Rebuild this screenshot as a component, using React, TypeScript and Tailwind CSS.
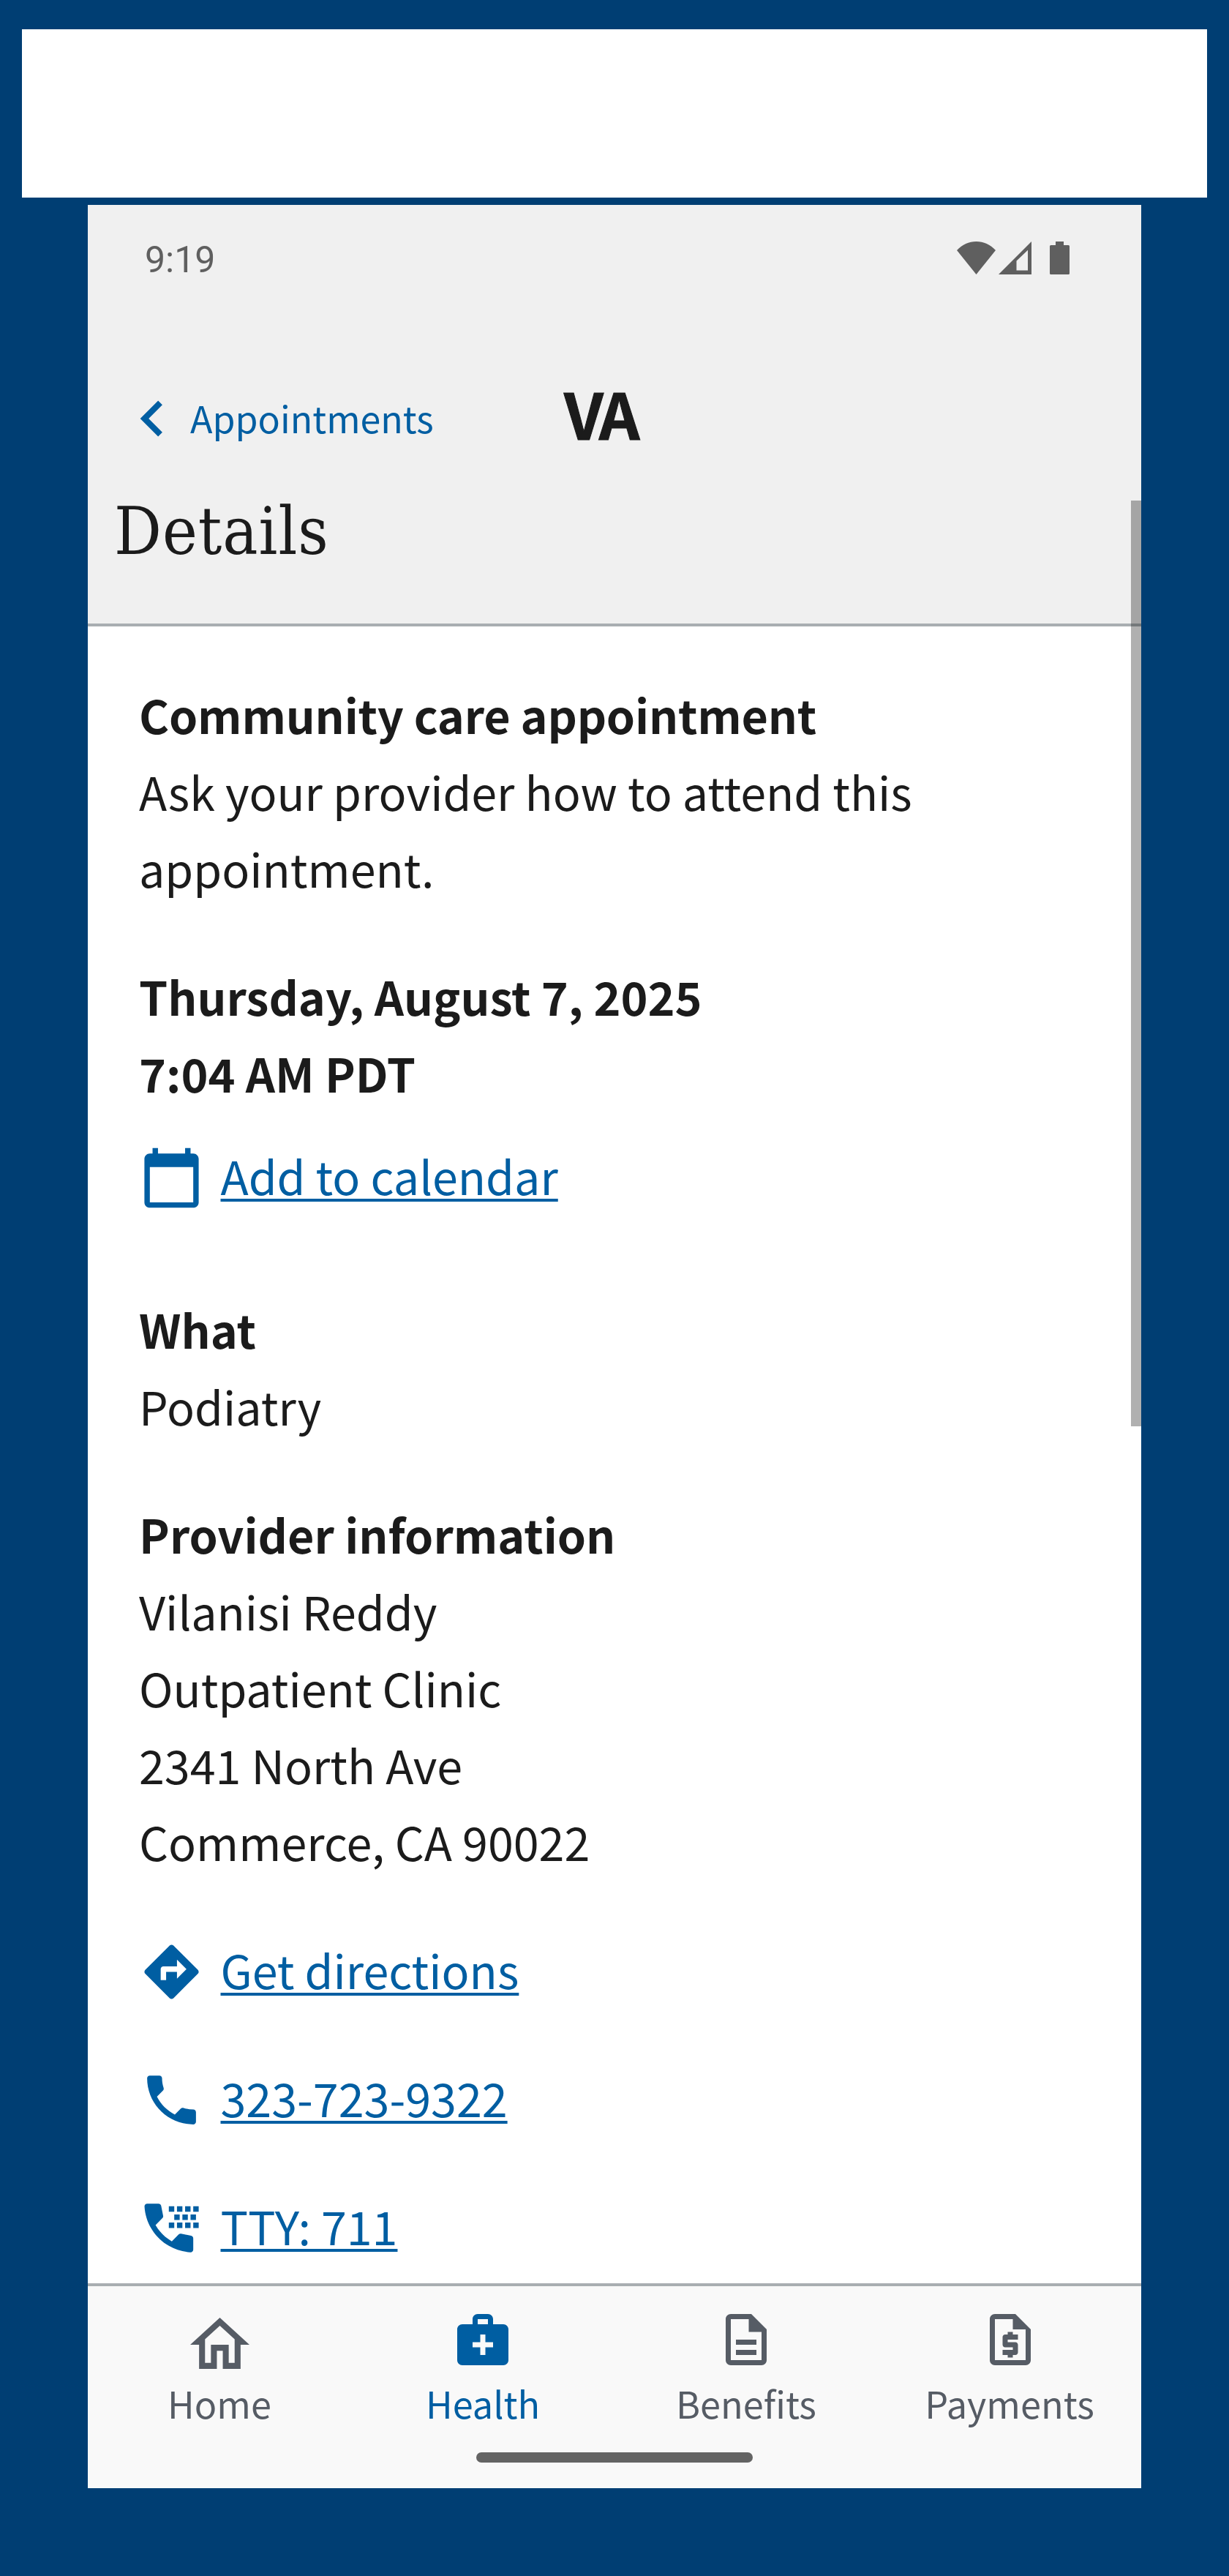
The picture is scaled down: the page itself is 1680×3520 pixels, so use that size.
import type { ReactNode } from "react";
import { MdTty } from "react-icons/md";

const SANS = "font-['Noto_Sans_CJK_SC',sans-serif]";

type IconProps = { d: string; viewBox?: string; className?: string };

function Icon({ d, viewBox = "0 0 24 24", className = "" }: IconProps) {
  return (
    <svg viewBox={viewBox} preserveAspectRatio="none" fill="currentColor" className={`block shrink-0 ${className}`}>
      <path d={d} />
    </svg>
  );
}

const CHEVRON = "M15.41 7.41L14 6l-6 6 6 6 1.41-1.41L10.83 12z";
const CALENDAR =
  "M20 3h-1V1h-2v2H7V1H5v2H4c-1.1 0-2 .9-2 2v16c0 1.1.9 2 2 2h16c1.1 0 2-.9 2-2V5c0-1.1-.9-2-2-2zm0 18H4V8h16v13z";
const DIRECTIONS =
  "M21.71 11.29l-9-9c-.39-.39-1.02-.39-1.41 0l-9 9c-.39.39-.39 1.02 0 1.41l9 9c.39.39 1.02.39 1.41 0l9-9c.39-.38.39-1.01 0-1.41zM14 14.5V12h-4v3H8v-4c0-.55.45-1 1-1h5V7.5l3.5 3.5-3.5 3.5z";
const PHONE =
  "M6.62 10.79c1.44 2.83 3.76 5.14 6.59 6.59l2.2-2.2c.27-.27.67-.36 1.02-.24 1.12.37 2.33.57 3.57.57.55 0 1 .45 1 1V20c0 .55-.45 1-1 1-9.39 0-17-7.61-17-17 0-.55.45-1 1-1h3.5c.55 0 1 .45 1 1 0 1.25.2 2.45.57 3.57.11.35.03.74-.25 1.02l-2.2 2.2z";
const HOME = "M12 5.69l5 4.5V18h-2v-6H9v6H7v-7.81l5-4.5M12 3L2 12h3v8h6v-6h2v6h6v-8h3L12 3z";
const HEALTH =
  "M20 6h-4V4c0-1.1-.9-2-2-2h-4c-1.1 0-2 .9-2 2v2H4c-1.1 0-2 .9-2 2v12c0 1.1.9 2 2 2h16c1.1 0 2-.9 2-2V8c0-1.1-.9-2-2-2zM10 4h4v2h-4V4zm6 11h-3v3h-2v-3H8v-2h3v-3h2v3h3v2z";
const BENEFITS =
  "M8 16h8v2H8zm0-4h8v2H8zm6-10H6c-1.1 0-2 .9-2 2v16c0 1.1.89 2 1.99 2H18c1.1 0 2-.9 2-2V8l-6-6zm4 18H6V4h7v5h5v11z";
const PAYMENTS =
  "M14 2H6c-1.1 0-2 .9-2 2v16c0 1.1.89 2 1.99 2H18c1.1 0 2-.9 2-2V8l-6-6zM6 20V4h7v4h5v12H6zm5-1h2v-1h1c.55 0 1-.45 1-1v-3c0-.55-.45-1-1-1h-3v-1h4v-2h-2V9h-2v1h-1c-.55 0-1 .45-1 1v3c0 .55.45 1 1 1h3v1H9v2h2v1z";

function StatusBar() {
  return (
    <div className="flex items-start justify-between pt-[50px] pr-[98px] pl-[78px] text-[#5f5f5f]">
      <span className="font-[Roboto,sans-serif] text-[50px] leading-none">9:19</span>
      <div className="flex items-start">
        <Icon viewBox="0 0 53 45" className="h-[45px] w-[53px]" d="M0 12C7.5 4 16.5 0 26.5 0S45.5 4 53 12L26.5 45z" />
        <Icon
          viewBox="0 0 45 45"
          className="ml-1 h-[45px] w-[45px]"
          d="M0 45L45 0V45zM24.5 26.5V39.5H40V11.7z"
        />
        <Icon
          viewBox="0 0 27 45"
          className="ml-[25px] h-[45px] w-[27px]"
          d="M8 0H19V5H25.5Q27 5 27 6.500V43.500Q27 45 25.500 45H1.500Q0 45 0 43.500V6.500Q0 5 1.500 5H8z"
        />
      </div>
    </div>
  );
}

function Header() {
  return (
    <header className="h-[576px] border-b-4 border-[#a9aeb1] bg-[#f0f0f0]">
      <StatusBar />
      <div className="mt-[143px] flex h-[98px] items-center pl-[39px]">
        <a className="flex items-center text-[#005ea2]">
          <Icon d={CHEVRON} className="size-[98px]" />
          <span className="-mt-[5px] ml-[3px] w-[333px] text-[50.1px] leading-[70px] whitespace-nowrap">Appointments</span>
        </a>
        <span className="-mt-[18px] ml-[178px] text-[87px] leading-[126px] font-bold tracking-[-4.500px] text-[#1b1b1b] [-webkit-text-stroke:1px_#1b1b1b]">
          VA
        </span>
      </div>
      <h1 className="mt-[53px] pl-9 font-['DejaVu_Serif_Condensed','DejaVu_Serif',serif] text-[90px] leading-[104px] tracking-[1px]">
        Details
      </h1>
    </header>
  );
}

function ActionLink({ icon, children }: { icon: ReactNode; children: ReactNode }) {
  return (
    <a className="flex h-[105px] items-start gap-[23px] text-[#005ea2]">
      <span className="mt-[11.500px] -ml-[0.500px] shrink-0">{icon}</span>
      <span className="underline decoration-4 underline-offset-[5px] [text-decoration-skip-ink:none]">{children}</span>
    </a>
  );
}

function Details() {
  return (
    <main className="h-[2264px] overflow-hidden bg-white px-[70px] pt-[67px] text-[62.8px] leading-[105px]">
      <section>
        <h2 className="font-bold tracking-[-0.200px]">Community care appointment</h2>
        <p>
          Ask your provider how to attend this
          <br />
          appointment.
        </p>
      </section>
      <section className="mt-[70px]">
        <p className="font-bold">Thursday, August 7, 2025</p>
        <p className="font-bold">7:04 AM PDT</p>
        <div className="mt-[35px]">
          <ActionLink icon={<Icon d={CALENDAR} className="size-[89px]" />}>Add to calendar</ActionLink>
        </div>
      </section>
      <section className="mt-[105px]">
        <h2 className="font-bold">What</h2>
        <p>Podiatry</p>
      </section>
      <section className="mt-[70px]">
        <h2 className="font-bold">Provider information</h2>
        <p>Vilanisi Reddy</p>
        <p>Outpatient Clinic</p>
        <p>2341 North Ave</p>
        <p>Commerce, CA 90022</p>
      </section>
      <section className="mt-[70px] flex flex-col gap-[70px]">
        <ActionLink icon={<Icon d={DIRECTIONS} className="size-[89px]" />}>Get directions</ActionLink>
        <ActionLink icon={<Icon d={PHONE} className="size-[89px]" />}>323-723-9322</ActionLink>
        <ActionLink icon={<MdTty className="block size-[89px]" />}>TTY: 711</ActionLink>
      </section>
    </main>
  );
}

function Tab({ label, icon, active = false }: { label: string; icon: ReactNode; active?: boolean }) {
  return (
    <div className={`flex flex-col items-center gap-[10px] ${active ? "text-[#005ea2]" : "text-[#565c65]"}`}>
      <div className="flex h-[84px] items-center">{icon}</div>
      <span className="text-[50.400px] leading-[70px]">{label}</span>
    </div>
  );
}

function TabBar() {
  return (
    <nav className="flex h-[280px] flex-col items-center border-t-4 border-[#a9aeb1] bg-[#f9f9f9] pt-[31px]">
      <div className="grid w-full grid-cols-4">
        <Tab label="Home" icon={<Icon d={HOME} viewBox="2 3 20 17" className="mt-[10px] ml-px h-[70px] w-[81px]" />} />
        <Tab label="Health" active icon={<Icon d={HEALTH} className="size-[84px]" />} />
        <Tab label="Benefits" icon={<Icon d={BENEFITS} className="size-[84px]" />} />
        <Tab label="Payments" icon={<Icon d={PAYMENTS} className="ml-[2px] size-[84px]" />} />
      </div>
      <div className="mt-[32px] h-[14px] w-[378px] rounded-full bg-[#646464]" />
    </nav>
  );
}

export default function App() {
  return (
    <div className={`h-[3520px] w-[1680px] bg-[#003e73] pt-10 text-[#1b1b1b] ${SANS}`}>
      <div className="mx-[30px] h-[230px] bg-white" />
      <div className="relative mx-[120px] mt-[10px] h-[3120px] overflow-hidden">
        <Header />
        <Details />
        <TabBar />
        <div className="absolute top-[404px] right-0 h-[1265px] w-[14px] bg-black/31" />
      </div>
    </div>
  );
}
